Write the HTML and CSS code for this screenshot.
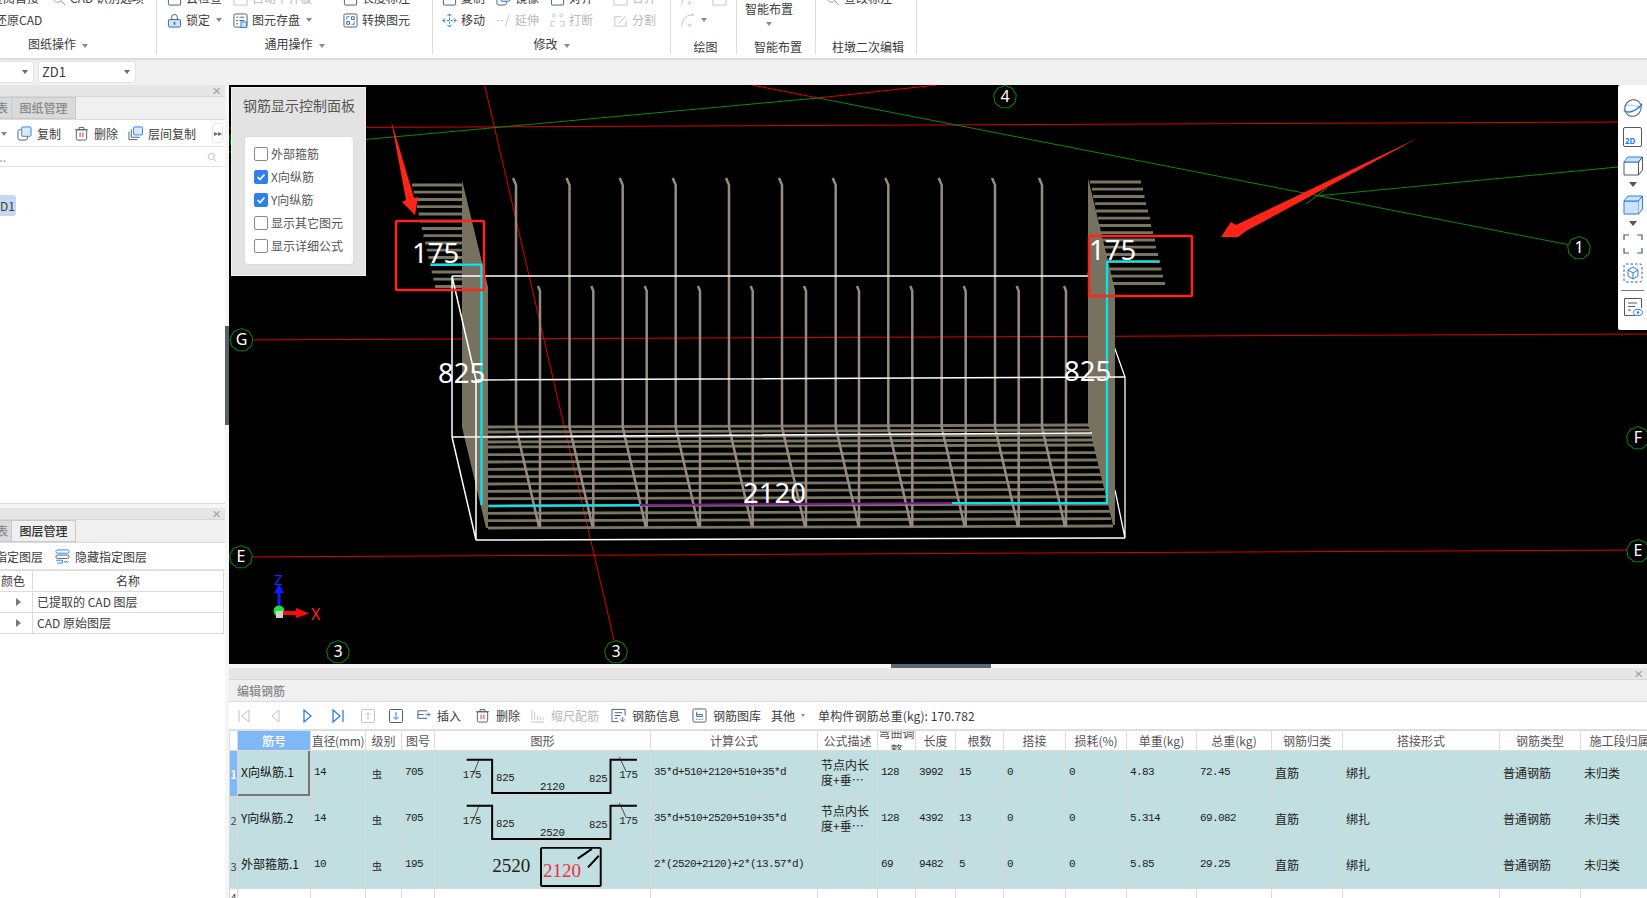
FILE: index.html
```html
<!DOCTYPE html>
<html lang="zh-CN">
<head>
<meta charset="utf-8">
<title>钢筋三维</title>
<link rel="stylesheet" href="styles.css">
</head>
<body>
<svg class="defs" xmlns="http://www.w3.org/2000/svg">
  <symbol id="bub" viewBox="0 0 24 24"><polygon points="12,.6 19.500,3.400 23.300,10 22,17.600 16,22.700 8,22.700 2,17.600 .7,10 4.500,3.400" fill="#000" stroke="#0a7d0a" stroke-width="1.100"/></symbol>
  <symbol id="i-lock" viewBox="0 0 16 16"><path d="M5 7V4.500a3 3 0 0 1 6 0V7" fill="none" stroke="#4a5a70"/><rect x="1.500" y="7" width="13" height="8" rx="1.500" fill="#cfe2fb" stroke="#4a5a70"/><rect x="7" y="9.500" width="2" height="3" fill="#2a7fe8"/></symbol>
  <symbol id="i-save" viewBox="0 0 16 16"><rect x="1" y="1" width="14" height="14" rx="1.500" fill="#fff" stroke="#4a5a70"/><path d="M3.500 4.500h2M7 4.500h5M3.500 8h2M7 8h5M3.500 11.500h2" fill="none" stroke="#4a5a70"/><rect x="8.500" y="9.500" width="6" height="6" fill="#cfe2fb" stroke="#2a7fe8"/></symbol>
  <symbol id="i-conv" viewBox="0 0 16 16"><rect x="1" y="1" width="14" height="14" rx="1.500" fill="none" stroke="#4a5a70"/><path d="M4 7V4h3M12 9v3H9" fill="none" stroke="#2a7fe8"/><path d="M9 4h3v3h-3zM4 9h3v3H4z" fill="none" stroke="#4a5a70"/></symbol>
  <symbol id="i-move" viewBox="0 0 16 16"><path d="M8 1v14M1 8h14" fill="none" stroke="#2a7fe8" stroke-dasharray="2.500 1.500"/><path d="M5.500 3.500 8 1l2.500 2.500M5.500 12.500 8 15l2.500-2.500M3.500 5.500 1 8l2.500 2.500M12.500 5.500 15 8l-2.500 2.500" fill="none" stroke="#2a7fe8"/></symbol>
  <symbol id="i-ext" viewBox="0 0 16 16"><path d="M1 8h7" fill="none" stroke="#c4c4c4" stroke-dasharray="2.500 1.500"/><path d="M14 2 10 14" fill="none" stroke="#c4c4c4"/></symbol>
  <symbol id="i-brk" viewBox="0 0 16 16"><circle cx="4" cy="2.500" r="1.500" fill="none" stroke="#c4c4c4"/><circle cx="12" cy="2.500" r="1.500" fill="none" stroke="#c4c4c4"/><path d="M1 14V9h4M15 14V9h-4M1 14h4M11 14h4" fill="none" stroke="#c4c4c4"/></symbol>
  <symbol id="i-spl" viewBox="0 0 16 16"><path d="M14 8v6H2V4h7" fill="none" stroke="#c4c4c4"/><path d="M6 11 14 3" fill="none" stroke="#c4c4c4"/></symbol>
  <symbol id="i-arc" viewBox="0 0 16 16"><path d="M2 15C2 7 6 2 13 2" fill="none" stroke="#c4c4c4"/><circle cx="10" cy="13" r="1.300" fill="none" stroke="#c4c4c4"/><circle cx="13.500" cy="2" r="1.200" fill="#c4c4c4"/></symbol>
  <symbol id="i-box" viewBox="0 0 16 16"><rect x="1.500" y="4" width="13" height="11" rx="1" fill="none" stroke="#4a5a70"/><path d="M1.500 4h13" stroke="#2a7fe8"/></symbol>
  <symbol id="i-gbox" viewBox="0 0 16 16"><rect x="1" y="1" width="6" height="6" fill="none" stroke="#c4c4c4"/><rect x="9" y="1" width="6" height="6" fill="none" stroke="#c4c4c4"/><rect x="1" y="9" width="14" height="6" fill="none" stroke="#c4c4c4"/></symbol>
  <symbol id="i-copy" viewBox="0 0 16 16"><rect x="1" y="4" width="10" height="11" rx="2" fill="#fff" stroke="#4a5a70"/><rect x="5" y="1" width="10" height="10" rx="1.500" fill="#dbe9fb" stroke="#2a7fe8"/></symbol>
  <symbol id="i-del" viewBox="0 0 16 16"><path d="M1 4h14M5.500 4V1.500h5V4" fill="none" stroke="#4a5a70"/><rect x="2.500" y="4" width="11" height="11" rx="1.500" fill="none" stroke="#4a5a70"/><path d="M6.500 7v5M9.500 7v5" stroke="#e8202a"/></symbol>
  <symbol id="i-lcopy" viewBox="0 0 16 16"><path d="M1 6v8.500h9M3.500 3.500v8.500h9" fill="none" stroke="#4a5a70"/><rect x="6" y="1" width="9.500" height="8.500" rx="1" fill="#dbe9fb" stroke="#2a7fe8"/></symbol>
  <symbol id="i-find" viewBox="0 0 16 16"><circle cx="7" cy="7" r="5" fill="none" stroke="#9a9a9a"/><path d="m11 11 4 4" stroke="#9a9a9a"/></symbol>
  <symbol id="i-hide" viewBox="0 0 16 16"><rect x="1" y="1" width="14" height="3.500" rx="1.700" fill="none" stroke="#2a7fe8"/><rect x="1" y="6.500" width="14" height="3.500" rx="1.700" fill="none" stroke="#4a5a70"/><path d="M1 12h7v3H2.500M10 13l1 1.500 1-1.500 1 1.500 1-1.500" fill="none" stroke="#2a7fe8"/></symbol>
  <symbol id="i-ins" viewBox="0 0 16 16"><path d="M12 3H2v8h10M2 7h6" fill="none" stroke="#4a5a70"/><path d="M10 7h5M13 5l2 2-2 2" fill="none" stroke="#2a7fe8"/></symbol>
  <symbol id="i-scale" viewBox="0 0 16 16"><path d="M2 2v11M5 5v8M8 8v5M11 9v4M14 10v3M1 15h14" fill="none" stroke="#c4c4c4"/></symbol>
  <symbol id="i-info" viewBox="0 0 16 16"><path d="M15 8V1.500H1v13h7" fill="none" stroke="#4a5a70"/><path d="M4 5h8M4 8h6M4 11h3" stroke="#4a5a70" fill="none"/><path d="M12.500 9.500v5M10 12l2.500 2.500L15 12" fill="none" stroke="#2a7fe8"/></symbol>
  <symbol id="i-lib" viewBox="0 0 16 16"><rect x="1" y="1" width="14" height="14" rx="1.500" fill="none" stroke="#4a5a70"/><path d="M5 4v5h6V7H5" fill="none" stroke="#4a5a70"/><path d="M4 12h8" stroke="#2a7fe8" stroke-dasharray="2 1"/></symbol>
  <symbol id="i-globe" viewBox="0 0 20 20"><ellipse cx="10" cy="10" rx="8" ry="8.500" transform="rotate(40 10 10)" fill="none" stroke="#4a5a70"/><path d="M1 12c2 4 12 2 18-6" fill="none" stroke="#2a7fe8" stroke-width="1.500"/><path d="M2 8c4-2 10 0 16 1" fill="none" stroke="#2a7fe8" opacity=".5"/></symbol>
  <symbol id="i-cube" viewBox="0 0 20 20"><path d="M1 6h14.500v13H1z" fill="#fff" stroke="#4a5a70"/><path d="M1 6 5 1h14.500l-4 5z" fill="#cfe2fb" stroke="#2a7fe8"/><path d="M15.500 6l4-5v13l-4 5" fill="none" stroke="#4a5a70"/></symbol>
  <symbol id="i-cube2" viewBox="0 0 20 20"><path d="M1 6h14.500v13H1z" fill="#cfe2fb" stroke="#2a7fe8"/><path d="M1 6 5 1h14.500l-4 5z" fill="#cfe2fb" stroke="#2a7fe8"/><path d="M15.500 6l4-5v13l-4 5" fill="#dbe9fb" stroke="#2a7fe8"/></symbol>
  <symbol id="i-frame" viewBox="0 0 20 20"><path d="M1 6V1h5M14 1h5v5M19 14v5h-5M6 19H1v-5" fill="none" stroke="#4a5a70" stroke-width="1.200"/></symbol>
  <symbol id="i-dcube" viewBox="0 0 20 20"><rect x="1" y="1" width="18" height="18" rx="2" fill="none" stroke="#4a5a70" stroke-dasharray="2.500 2"/><path d="m10 4 5 3v6l-5 3-5-3V7zM5 7l5 3 5-3M10 10v6" fill="none" stroke="#2a7fe8"/></symbol>
  <symbol id="i-eye" viewBox="0 0 20 20"><path d="M12 18.500H1.500v-17h17V11" fill="none" stroke="#4a5a70"/><path d="M5 6h9M5 9.500h7M5 13h3" stroke="#4a5a70" fill="none"/><ellipse cx="15" cy="15.500" rx="4.500" ry="3" fill="#fff" stroke="#2a7fe8"/><circle cx="15" cy="15.500" r="1.200" fill="#2a7fe8"/></symbol>
</svg>

<div class="app">
  <header class="ribbon">
    <section class="group g1">
      <div class="rows">
        <div class="row r-g1"><span class="item">查阅首接</span><span class="item"><svg class="ic"><use href="#i-find"/></svg>CAD 识别选项</span></div>
        <div class="row r-g1"><span class="item cut-b">还原CAD</span></div>
      </div>
      <div class="label">图纸操作<i class="caret"></i></div>
    </section>
    <section class="group g2">
      <div class="rows">
        <div class="row r-g2"><span class="item"><svg class="ic"><use href="#i-box"/></svg>云检查</span><span class="item off"><svg class="ic"><use href="#i-gbox"/></svg>自动平齐板</span><span class="item"><svg class="ic"><use href="#i-box"/></svg>长度标注</span></div>
        <div class="row r-g2"><span class="item"><svg class="ic"><use href="#i-lock"/></svg>锁定<i class="caret"></i></span><span class="item"><svg class="ic"><use href="#i-save"/></svg>图元存盘<i class="caret"></i></span><span class="item"><svg class="ic"><use href="#i-conv"/></svg>转换图元</span></div>
      </div>
      <div class="label">通用操作<i class="caret"></i></div>
    </section>
    <section class="group g3">
      <div class="rows">
        <div class="row r-g3"><span class="item"><svg class="ic"><use href="#i-box"/></svg>复制</span><span class="item"><svg class="ic"><use href="#i-copy"/></svg>镜像</span><span class="item"><svg class="ic"><use href="#i-box"/></svg>对齐</span><span class="item off"><svg class="ic"><use href="#i-gbox"/></svg>合并</span></div>
        <div class="row r-g3"><span class="item"><svg class="ic"><use href="#i-move"/></svg>移动</span><span class="item off"><svg class="ic"><use href="#i-ext"/></svg>延伸</span><span class="item off"><svg class="ic"><use href="#i-brk"/></svg>打断</span><span class="item off"><svg class="ic"><use href="#i-spl"/></svg>分割</span></div>
      </div>
      <div class="label">修改<i class="caret"></i></div>
    </section>
    <section class="group g4">
      <div class="rows">
        <div class="row r-g4"><span class="item"><svg class="ic"><use href="#i-arc"/></svg></span><span class="item"><svg class="ic"><use href="#i-gbox"/></svg></span></div>
        <div class="row r-g4"><span class="item"><svg class="ic"><use href="#i-arc"/></svg><i class="caret"></i></span></div>
      </div>
      <div class="label low">绘图</div>
    </section>
    <section class="group g5">
      <div class="rows">
        <div class="bigbtn"><span>智能布置</span><i class="caret"></i></div>
      </div>
      <div class="label low">智能布置</div>
    </section>
    <section class="group g6">
      <div class="rows">
        <div class="row"><span class="item"><svg class="ic"><use href="#i-find"/></svg>查改标注</span></div>
        <div class="row"></div>
      </div>
      <div class="label low">柱墩二次编辑</div>
    </section>
  </header>

  <div class="combos">
    <div class="combo c-a"><i class="caret dark"></i></div>
    <div class="combo c-b"><span>ZD1</span><i class="caret dark"></i></div>
  </div>

  <main class="main">
    <aside class="side">
      <section class="panel p-top">
        <div class="p-head"><span class="x">×</span></div>
        <div class="tabs"><span class="tab stub"><span>表</span></span><span class="tab">图纸管理</span></div>
        <div class="tools">
          <i class="caret tool-c"></i>
          <span class="tool t-a"><svg class="ic"><use href="#i-copy"/></svg>复制</span>
          <span class="tool t-b"><svg class="ic"><use href="#i-del"/></svg>删除</span>
          <span class="tool t-c"><svg class="ic"><use href="#i-lcopy"/></svg>层间复制</span>
          <span class="more">▸▸</span>
        </div>
        <div class="search"><span>...</span><svg class="ic sm"><use href="#i-find"/></svg></div>
        <div class="list"><span class="pick">D1</span></div>
      </section>
      <section class="panel p-bot">
        <div class="p-head"><span class="x">×</span></div>
        <div class="tabs"><span class="tab stub"><span>表</span></span><span class="tab on">图层管理</span></div>
        <div class="tools t2">
          <span class="tool cut-c">指定图层</span>
          <span class="tool"><svg class="ic"><use href="#i-hide"/></svg>隐藏指定图层</span>
        </div>
        <div class="ltable">
          <div class="lrow lh"><span class="lc1">颜色</span><span class="lc2 mid">名称</span></div>
          <div class="lrow"><span class="lc1"><i class="tri"></i></span><span class="lc2">已提取的 CAD 图层</span></div>
          <div class="lrow"><span class="lc1"><i class="tri"></i></span><span class="lc2">CAD 原始图层</span></div>
        </div>
      </section>
    </aside>
    <div class="gutter"><i class="grip"></i></div>

    <div class="work">
      <div class="canvas">
        <svg class="scene" viewBox="229 85 1418 579" xmlns="http://www.w3.org/2000/svg">
          <g class="ln-red">
            <path d="M229 340 1647 334M229 557 1647 550M229 128 1618 122M484.600 85 614 640M752 85 818 98M818 98 937 85"/>
          </g>
          <g class="ln-green">
            <path d="M818 98 1570 245M229 152 818 98M1316 196 1618 167M1306 204 1327 188"/>
          </g>
          <use href="#bub" x="229" y="127" width="24" height="24"/>
          <use href="#bub" x="993" y="85" width="24" height="24"/>
          <use href="#bub" x="1567" y="236" width="24" height="24"/>
          <use href="#bub" x="229.500" y="328" width="24" height="24"/>
          <use href="#bub" x="1626" y="426" width="24" height="24"/>
          <use href="#bub" x="229" y="545" width="24" height="24"/>
          <use href="#bub" x="1626" y="539" width="24" height="24"/>
          <use href="#bub" x="326" y="640" width="24" height="24"/>
          <use href="#bub" x="604" y="640" width="24" height="24"/>
          <g class="bubble-t">
            <text x="1005" y="102">4</text><text x="1579" y="253">1</text><text x="241.500" y="345">G</text>
            <text x="1638" y="443">F</text><text x="241" y="562">E</text><text x="1638" y="556">E</text>
            <text x="338" y="657">3</text><text x="616" y="657">3</text>
          </g>
          <path class="wire" d="M1088 273 1125 377V538M1115 490 1125 538"/>
          <path class="wall" d="M462 180 488 287V528H486L462 427ZM1088 178 1115 290V525H1113L1089 427H1088Z"/>
          <path class="hook" d="M412 185H462M413.600 192.200H462M415.300 199.500H462M416.900 206.700H462M418.600 214H462M420.200 221.200H462M421.800 228.500H462M423.500 235.700H462M425.100 243H462M426.800 250.200H462M428.400 257.500H462M430 264.700H462M431.700 272H462M433.300 279.200H462M435 286.500H462"/>
          <path class="hook" d="M1090 182H1141M1092 189.200H1143M1093 196.500H1144.500M1095 203.700H1146M1096 211H1148M1098 218.200H1150M1099 225.500H1151M1101 232.700H1153M1103 240H1155M1104 247.200H1156M1106 254.500H1158M1107 261.700H1160M1109 269H1161.500M1110 276.200H1163M1112 283.500H1165"/>
          <path class="hook" d="M488 427 1089 425M488 432 1090 430M488 437 1091 435M488 442 1093 440M488 447 1094 445M488 454.700 1096 452.700M488 462 1097 460M488 469.300 1099 467.300M488 476.700 1101 474.700M488 484 1103 482M488 491.300 1104 489.300M488 498.700 1106 496.700M488 506 1108 504M488 513.300 1110 511.300M488 520.700 1111 518.700M488 528 1113 526"/>
          <path class="bar" d="M513 178 516 185V427L539 527M566.500 178 569.500 185V427L592.500 527M619.700 178 622.700 185V427L645.700 527M672.700 178 675.700 185V427L698.700 527M726 178 729 185V427L752 527M779 178 782 185V427L805 527M832.700 178 835.700 185V427L858.700 527M885.300 178 888.300 185V427L911.300 527M938.700 178 941.700 185V427L964.700 527M992 178 995 185V427L1018 527M1039 178 1042 185V427L1065 527"/>
          <path class="bar" d="M538 286 540 291V527M591.300 286 593.300 291V527M644.700 286 646.700 291V527M698 286 700 291V527M750.700 286 752.700 291V527M804 286 806 291V527M857 286 859 291V527M910.300 286 912.300 291V527M963.700 286 965.700 291V527M1016.700 286 1018.700 291V527M1064 286 1066 291V527"/>
          <path class="wire w2" d="M452 276H1088M475 380 1125 377M452 437 1092 433M476 540 1125 538M452 276V437M476 380V540M452 276 476 380M452 437 476 540"/>
          <path class="cyan" d="M431 265 481.500 264.500V505M489 506 640 505M952 503 1107 503V262L1110 261.500H1159"/>
          <path class="purple" d="M640 505 952 503"/>
          <text class="dim" x="412" y="263">175</text>
          <text class="dim" x="1089" y="260">175</text>
          <text class="dim" x="438" y="383">825</text>
          <text class="dim" x="1064" y="381">825</text>
          <text class="dim" x="743" y="503">2120</text>
          <rect class="mark" x="396" y="221" width="88" height="69" rx="1"/>
          <rect class="mark" x="1089" y="236" width="103" height="60" rx="1"/>
          <polygon class="arrow" points="391,120 414,198 418,197 415,215 402,202 406,200"/>
          <polygon class="arrow" points="1418,138 1246,231 1238,237 1221,237 1231,222 1236,225"/>
          <path class="ax-z" d="M279 610V590"/><polygon class="ax-zh" points="274,593 279,584 284,593"/>
          <circle class="ax-o" cx="279" cy="611" r="5.500"/>
          <path class="ax-x" d="M283 613H298"/><polygon class="ax-xh" points="296,608 309,613.500 296,618"/>
          <rect class="ax-s" x="276" y="611" width="7" height="7"/>
          <text class="ax-tz" x="274" y="585">Z</text>
          <text class="ax-tx" x="311" y="620">X</text>
        </svg>

        <div class="ctl">
          <div class="ctl-t">钢筋显示控制面板</div>
          <div class="ctl-b">
            <div class="chk"><i class="cb"></i>外部箍筋</div>
            <div class="chk"><i class="cb on"><svg viewBox="0 0 14 14"><path d="m3 7 3 3 5-6" fill="none" stroke="#fff" stroke-width="2"/></svg></i>X向纵筋</div>
            <div class="chk"><i class="cb on"><svg viewBox="0 0 14 14"><path d="m3 7 3 3 5-6" fill="none" stroke="#fff" stroke-width="2"/></svg></i>Y向纵筋</div>
            <div class="chk"><i class="cb"></i>显示其它图元</div>
            <div class="chk"><i class="cb"></i>显示详细公式</div>
          </div>
        </div>

        <div class="rail">
          <svg class="ri"><use href="#i-globe"/></svg>
          <div class="ri2d">2D</div>
          <svg class="ri"><use href="#i-cube"/></svg>
          <i class="dn"></i>
          <svg class="ri"><use href="#i-cube2"/></svg>
          <i class="dn"></i>
          <svg class="ri"><use href="#i-frame"/></svg>
          <svg class="ri"><use href="#i-dcube"/></svg>
          <i class="sep"></i>
          <svg class="ri"><use href="#i-eye"/></svg>
        </div>
      </div>
      <div class="split"><i class="split-h"></i></div>

      <section class="bottom">
        <div class="p-head"><span class="x">×</span></div>
        <div class="b-title">编辑钢筋</div>
        <div class="b-tools">
          <svg class="nav n1" viewBox="0 0 12 14"><path d="M1 1v12M11 1 4 7l7 6z" fill="none" stroke="#c4c4c4"/></svg>
          <svg class="nav n2" viewBox="0 0 12 14"><path d="M9 1 2 7l7 6z" fill="none" stroke="#c4c4c4"/></svg>
          <svg class="nav n2b" viewBox="0 0 12 14"><path d="m3 1 7 6-7 6z" fill="none" stroke="#2a7fe8" stroke-width="1.300"/></svg>
          <svg class="nav n2c" viewBox="0 0 12 14"><path d="m1 1 7 6-7 6zM11 1v12" fill="none" stroke="#2a7fe8" stroke-width="1.300"/></svg>
          <svg class="nav n3" viewBox="0 0 14 14"><rect x=".5" y=".5" width="13" height="13" rx="1" fill="none" stroke="#c4c4c4"/><path d="M7 11V4M4.500 6 7 3.500 9.500 6" fill="none" stroke="#c4c4c4"/></svg>
          <svg class="nav n4" viewBox="0 0 14 14"><rect x=".5" y=".5" width="13" height="13" rx="1" fill="none" stroke="#4a5a70"/><path d="M7 3v7M4.500 8 7 10.500 9.500 8" fill="none" stroke="#2a7fe8"/></svg>
          <span class="bt b-ins"><svg class="ic"><use href="#i-ins"/></svg>插入</span>
          <span class="bt b-del"><svg class="ic"><use href="#i-del"/></svg>删除</span>
          <span class="bt b-sc off"><svg class="ic"><use href="#i-scale"/></svg>缩尺配筋</span>
          <span class="bt b-in"><svg class="ic"><use href="#i-info"/></svg>钢筋信息</span>
          <span class="bt b-lb"><svg class="ic"><use href="#i-lib"/></svg>钢筋图库</span>
          <span class="bt b-ot">其他<i class="caret"></i></span>
          <span class="bt b-sum">单构件钢筋总重(kg): 170.782</span>
        </div>
        <div class="tbl-wrap">
          <table class="rebar">
            <colgroup><col class="c0"><col class="c1"><col class="c2"><col class="c3"><col class="c4"><col class="c5"><col class="c6"><col class="c7"><col class="c8"><col class="c9"><col class="c10"><col class="c11"><col class="c12"><col class="c13"><col class="c14"><col class="c15"><col class="c16"><col class="c17"><col class="c18"></colgroup>
            <thead><tr><th></th><th class="hsel">筋号</th><th class="tight">直径(mm)</th><th>级别</th><th>图号</th><th>图形</th><th>计算公式</th><th>公式描述</th><th><div class="wrap2">弯曲调整</div></th><th>长度</th><th>根数</th><th>搭接</th><th>损耗(%)</th><th>单重(kg)</th><th>总重(kg)</th><th>钢筋归类</th><th>搭接形式</th><th>钢筋类型</th><th>施工段归属</th></tr></thead>
            <tbody>
              <tr>
                <td class="rn rsel">1</td><td class="nm sel">X向纵筋.1</td><td class="m">14</td><td class="gr">虫</td><td class="m">705</td>
                <td class="sh"><svg class="shape" viewBox="0 0 216 46"><path class="sl" d="M30 9H56V43H177V9H204"/><path class="st" d="M43 8 37 23M186 6 193 21"/><text class="sn" x="26" y="28">175</text><text class="sn" x="60" y="31">825</text><text class="sn" x="155" y="32">825</text><text class="sn" x="105" y="40">2120</text><text class="sn" x="186" y="28">175</text></svg></td>
                <td class="m">35*d+510+2120+510+35*d</td><td class="cj">节点内长<br>度+垂…</td><td class="m">128</td><td class="m">3992</td><td class="m">15</td><td class="m">0</td><td class="m">0</td><td class="m">4.83</td><td class="m">72.45</td><td class="cj">直筋</td><td class="cj">绑扎</td><td class="cj">普通钢筋</td><td class="cj">未归类</td>
              </tr>
              <tr>
                <td class="rn">2</td><td class="nm">Y向纵筋.2</td><td class="m">14</td><td class="gr">虫</td><td class="m">705</td>
                <td class="sh"><svg class="shape" viewBox="0 0 216 46"><path class="sl" d="M30 9H56V43H177V9H204"/><path class="st" d="M43 8 37 23M186 6 193 21"/><text class="sn" x="26" y="28">175</text><text class="sn" x="60" y="31">825</text><text class="sn" x="155" y="32">825</text><text class="sn" x="105" y="40">2520</text><text class="sn" x="186" y="28">175</text></svg></td>
                <td class="m">35*d+510+2520+510+35*d</td><td class="cj">节点内长<br>度+垂…</td><td class="m">128</td><td class="m">4392</td><td class="m">13</td><td class="m">0</td><td class="m">0</td><td class="m">5.314</td><td class="m">69.082</td><td class="cj">直筋</td><td class="cj">绑扎</td><td class="cj">普通钢筋</td><td class="cj">未归类</td>
              </tr>
              <tr>
                <td class="rn">3</td><td class="nm">外部箍筋.1</td><td class="m">10</td><td class="gr">虫</td><td class="m">195</td>
                <td class="sh"><svg class="shape" viewBox="0 0 216 46"><rect class="sl" x="106" y="5" width="61" height="39" rx="1"/><path class="sl" d="M143.500 16 158 6M154 25 165 13"/><text class="sb" x="56" y="30">2520</text><text class="sb red" x="108" y="35">2120</text></svg></td>
                <td class="m">2*(2520+2120)+2*(13.57*d)</td><td></td><td class="m">69</td><td class="m">9482</td><td class="m">5</td><td class="m">0</td><td class="m">0</td><td class="m">5.85</td><td class="m">29.25</td><td class="cj">直筋</td><td class="cj">绑扎</td><td class="cj">普通钢筋</td><td class="cj">未归类</td>
              </tr>
              <tr class="blank"><td class="rn">4</td><td></td><td></td><td></td><td></td><td></td><td></td><td></td><td></td><td></td><td></td><td></td><td></td><td></td><td></td><td></td><td></td><td></td><td></td></tr>
            </tbody>
          </table>
        </div>
      </section>
    </div>
  </main>
</div>
</body>
</html>
```
FILE: styles.css
```css
* { box-sizing: border-box; }
html, body { margin: 0; padding: 0; width: 1647px; height: 898px; overflow: hidden; background: #fff; }
body { font: 12px/16px "Noto Sans CJK SC", "Liberation Sans", sans-serif; color: #3c3c3c; }
.defs { display: none; }
i { font-style: normal; }
.app { display: flex; flex-direction: column; height: 898px; }
.ic { width: 15px; height: 15px; flex: none; }
.ic.sm { width: 10px; height: 10px; }
.caret { display: inline-block; width: 0; height: 0; border: 3.500px solid transparent; border-top: 4px solid #8a8a8a; border-bottom: 0; margin-left: 6px; vertical-align: middle; }
.caret.dark { border-top-color: #666; }

/* ribbon */
.ribbon { display: flex; flex: none; height: 60px; padding-bottom: 6px; background: #fff; border-bottom: 2px solid #dcdcdc; overflow: hidden; }
.group { display: flex; flex-direction: column; justify-content: flex-end; flex: none; height: 54px; border-right: 1px solid #dcdcdc; }
.g1 { width: 197px; margin-left: -40px; } .g2 { width: 276px; } .g3 { width: 238px; }
.g4 { width: 66px; } .g5 { width: 79px; } .g6 { width: 101px; }
.rows { flex: none; margin-bottom: 3px; }
.g1 .rows { padding-left: 31px; } .g2 .rows { padding-left: 10px; } .g3 .rows { padding-left: 9px; }
.g4 .rows { padding-left: 9px; } .g5 .rows { padding-left: 8px; } .g6 .rows { padding-left: 9px; }
.row { display: grid; height: 22px; align-items: center; }
.r-g1 { grid-template-columns: 60px auto; } .r-g2 { grid-template-columns: 66px 110px auto; }
.r-g3 { grid-template-columns: 54px 54px 63px auto; } .r-g4 { grid-template-columns: 32px auto; }
.item { display: flex; align-items: center; gap: 4px; white-space: nowrap; }
.item .caret { margin-left: 2px; }
.off { color: #b9b9b9; }
.cut-b { margin-left: 4px; }
.label { flex: none; height: 20px; line-height: 20px; text-align: center; }
.label.low { line-height: 25px; padding-left: 4px; }
.bigbtn { display: flex; flex-direction: column; align-items: center; width: 48px; height: 31px; line-height: 18px; }
.bigbtn span { white-space: nowrap; }
.bigbtn .caret { margin: 4px 0 0; }

/* combos */
.combos { display: flex; flex: none; gap: 4px; height: 25px; padding-top: 1px; align-items: flex-start; background: #f0f0f0; }
.combo { position: relative; display: flex; align-items: center; justify-content: space-between; height: 22px; background: #fff; border: 1px solid #e2e2e2; border-radius: 3px; padding: 0 5px 0 3px; font-size: 13px; }
.c-a { width: 36px; margin-left: -2px; justify-content: flex-end; }
.c-b { width: 98px; }

/* layout */
.main { display: flex; flex: 1; min-height: 0; background: #f0f0f0; }
.side { width: 225px; flex: none; display: flex; flex-direction: column; background: #f5f5f5; }
.gutter { position: relative; width: 4px; flex: none; background: #f5f5f5; }
.grip { position: absolute; left: 0; top: 241px; width: 4px; height: 99px; background: #55606b; }
.panel { display: flex; flex-direction: column; background: #fff; overflow: hidden; }
.p-top { height: 419px; flex: none; margin-bottom: 4px; border-bottom: 1px solid #dcdcdc; }
.p-bot { flex: 1; }
.p-head { position: relative; flex: none; height: 12px; background: #e6e6e6; border-bottom: 1px solid #d6d6d6; }
.x { position: absolute; right: 4px; top: 0; font: 15px/11px "Liberation Sans", sans-serif; color: #a0a0a0; }
.tabs { display: flex; flex: none; height: 23px; background: #f0f0f0; border-bottom: 1px solid #dcdcdc; }
.tab { width: 65px; text-align: center; line-height: 20px; background: #dadada; border: 1px solid #c9c9c9; color: #8a8a8a; font-weight: 500; }
.tab.stub { width: 11px; overflow: hidden; display: flex; justify-content: flex-end; border-left: 0; border-right: 0; }
.tab.stub span { flex: none; margin-right: 3px; }
.tab.on { background: #f0f0f0; color: #333; }
.tools { position: relative; display: flex; flex: none; align-items: center; height: 27px; padding-top: 1px; border-bottom: 1px solid #e4e4e4; white-space: nowrap; }
.tool { display: flex; align-items: center; gap: 5px; }
.tool-c { margin: 0 0 0 1px; }
.t-a { margin-left: 10px; } .t-b { margin-left: 13px; } .t-c { margin-left: 10px; }
.more { position: absolute; left: 212px; top: 3px; width: 11px; height: 20px; font-size: 8px; line-height: 18px; text-align: center; color: #666; border: 1px solid #e8e8e8; border-radius: 3px; }
.search { display: flex; flex: none; justify-content: space-between; align-items: center; height: 20px; padding-right: 8px; border-bottom: 1px solid #e4e4e4; color: #999; }
.search span { margin-left: -4px; }
.list { padding-top: 28px; flex: 1; }
.pick { display: block; width: 16px; height: 21px; line-height: 21px; background: #c3daf2; border-radius: 0 3px 3px 0; text-align: right; padding-right: 2px; overflow: hidden; }
.t2 { gap: 12px; }
.cut-c { margin-left: -5px; }
.ltable { flex: none; margin-right: 1px; border-top: 1px solid #dcdcdc; }
.lrow { display: flex; height: 21px; line-height: 20px; border-bottom: 1px solid #dcdcdc; }
.lc1 { position: relative; width: 33px; flex: none; text-align: center; padding-right: 6px; border-right: 1px solid #dcdcdc; }
.lc2 { flex: 1; padding-left: 4px; border-right: 1px solid #dcdcdc; }
.mid { text-align: center; padding-left: 0; }
.tri { position: absolute; left: 16px; top: 6px; width: 0; height: 0; border: 4px solid transparent; border-left: 5px solid #777; border-right: 0; }

/* canvas */
.work { display: flex; flex-direction: column; flex: 1; min-width: 0; }
.canvas { position: relative; flex: none; height: 579px; background: #000; overflow: hidden; }
.scene { display: block; width: 1418px; height: 579px; }
.ln-red path { fill: none; stroke: #e00000; stroke-width: 1; }
.ln-green path { fill: none; stroke: #0a8a0a; stroke-width: 1; }
.bubble-t text { font: 16px "Noto Sans", sans-serif; fill: #fff; text-anchor: middle; }
.wire { fill: none; stroke: #fff; stroke-width: 1.300; }
.w2 { stroke-width: 1.500; }
.wall { fill: #77725f; }
.hook { fill: none; stroke: #7a7563; stroke-width: 2.800; }
.bar { fill: none; stroke: #968a84; stroke-width: 2.500; }
.cyan { fill: none; stroke: #00e8f0; stroke-width: 2.200; }
.purple { fill: none; stroke: #7d1a96; stroke-width: 2; }
.dim { font: 27.500px "Noto Sans", sans-serif; fill: #fff; }
.mark { fill: none; stroke: #ff2418; stroke-width: 2.500; }
.arrow { fill: #ff2418; }
.ax-z { fill: none; stroke: #0a1eff; stroke-width: 3; }
.ax-zh { fill: #0a1eff; }
.ax-o { fill: #22e03a; }
.ax-x { fill: none; stroke: #ff0a0a; stroke-width: 4; }
.ax-xh { fill: #ff0a0a; }
.ax-s { fill: #cfcfcf; }
.ax-tz { font: 15px "Noto Sans", sans-serif; fill: #1a2aff; }
.ax-tx { font: 16px "Noto Sans", sans-serif; fill: #ff2020; }
.ctl { position: absolute; left: 2px; top: 2px; width: 135px; height: 189px; background: #e3e3e3; border: 1px solid #f2f2f2; padding: 0 12px; }
.ctl-t { height: 48px; line-height: 35px; font-size: 14px; color: #555; white-space: nowrap; margin-left: -1px; }
.ctl-b { width: 110px; height: 129px; padding: 5px 0 0 9px; background: #fff; border: 1px solid #dcdcdc; border-radius: 4px; }
.chk { display: flex; align-items: center; gap: 3px; height: 23px; color: #555; white-space: nowrap; }
.cb { display: block; flex: none; width: 14px; height: 14px; border: 1px solid #8a8a8a; border-radius: 2px; background: #fff; }
.cb.on { background: #2f80ed; border-color: #2f80ed; }
.cb svg { display: block; width: 12px; height: 12px; }
.rail { position: absolute; right: 0; top: 0; width: 29px; height: 245px; padding-top: 13px; display: flex; flex-direction: column; align-items: center; gap: 9px; background: #fff; border-radius: 2px 0 0 2px; }
.ri { display: block; flex: none; width: 20px; height: 20px; }
.ri2d { flex: none; width: 19px; height: 20px; border: 1px solid #4a5a70; border-radius: 2px; font: 700 8px/26px "Noto Sans", sans-serif; color: #2a7fe8; text-align: left; padding-left: 1px; }
.dn { flex: none; width: 0; height: 0; margin: -3px 0 -1px; border: 4.500px solid transparent; border-top: 5px solid #555; border-bottom: 0; }
.sep { flex: none; width: 23px; height: 1px; margin: -2px 0 -3px; background: #777; }

/* bottom */
.split { position: relative; flex: none; height: 4px; background: #f5f5f5; }
.split-h { position: absolute; left: 662px; top: 0; width: 100px; height: 4px; background: #5a6672; }
.bottom { display: flex; flex-direction: column; flex: 1; min-height: 0; background: #fff; }
.bottom .p-head { height: 12px; }
.b-title { flex: none; height: 22px; line-height: 22px; padding-left: 8px; background: #f0f0f0; border-bottom: 1px solid #dcdcdc; color: #888; font-weight: 500; }
.b-tools { display: flex; flex: none; align-items: center; height: 28px; white-space: nowrap; border-bottom: 1px solid #e0e0e0; }
.nav { flex: none; height: 14px; }
.n1 { width: 12px; margin-left: 9px; }
.n2 { width: 12px; margin-left: 20px; }
.n2b { width: 12px; margin-left: 19px; }
.n2c { width: 12px; margin-left: 19px; }
.n3 { width: 14px; margin-left: 17px; }
.n4 { width: 14px; margin-left: 14px; }
.bt { display: flex; flex: none; align-items: center; gap: 6px; }
.b-ins { margin-left: 13px; } .b-del { margin-left: 14px; } .b-sc { margin-left: 10px; } .b-in { margin-left: 12px; }
.b-lb { margin-left: 12px; } .b-ot { margin-left: 10px; gap: 0; } .b-sum { margin-left: 13px; letter-spacing: .1px; }
.bt .caret { margin-left: 6px; border-width: 2.500px; border-top-width: 3px; border-bottom-width: 0; }
.tbl-wrap { flex: 1; min-height: 0; overflow: hidden; }
.rebar { table-layout: fixed; border-collapse: collapse; width: 1429px; }
.c0 { width: 8px; } .c1 { width: 73px; } .c2 { width: 55px; } .c3 { width: 36px; } .c4 { width: 33px; }
.c5 { width: 216px; } .c6 { width: 167px; } .c7 { width: 60px; } .c8 { width: 38px; } .c9 { width: 40px; }
.c10 { width: 48px; } .c11 { width: 62px; } .c12 { width: 61px; } .c13 { width: 70px; } .c14 { width: 75px; }
.c15 { width: 71px; } .c16 { width: 157px; } .c17 { width: 81px; } .c18 { width: 78px; }
.rebar th { height: 20px; padding: 0; font-weight: 400; color: #555; background: #fff; border: 1px solid #dcdcdc; line-height: 18px; white-space: nowrap; overflow: hidden; }
.rebar th.hsel { background: #7fb8f7; color: #fff; font-weight: 500; }
.rebar th.tight { font-size: 12px; letter-spacing: -.3px; }
.wrap2 { display: flex; align-items: center; height: 19px; white-space: normal; overflow: hidden; line-height: 17px; }
.rebar td { height: 45px; padding: 0 0 0 3px; background: #c1dee0; border: 1px solid #d8d8d8; color: #222; overflow: hidden; white-space: nowrap; }
.rebar .blank td { height: 14px; background: #fff; }
.rebar td.m { font: 11px/14px "Liberation Mono", monospace; letter-spacing: -.6px; padding-bottom: 3px; }
.rebar td.cj { line-height: 15px; padding: 0 0 3px 3px; }
.rebar td.gr { padding: 0 0 0 6px; font-size: 10px; }
.rebar td.nm { padding: 0 0 3px 3px; font-size: 12px; color: #111; }
.rebar td.rn { padding: 0; text-align: center; font-size: 11px; color: #444; }
.rebar td.rsel { background: #7fb8f7; color: #fff; font-weight: 700; }
.rebar td.sel { box-shadow: inset -2px -2px 0 #777; }
.rebar td.sh { padding: 0; }
.shape { display: block; width: 216px; height: 45px; }
.sl { fill: none; stroke: #000; stroke-width: 2; }
.st { fill: none; stroke: #222; stroke-width: .8; }
.sn { font: 11px "Liberation Mono", monospace; letter-spacing: -.3px; fill: #222; }
.sb { font: 19.500px "Liberation Serif", serif; fill: #222; }
.sb.red { fill: #f0303e; }
```
